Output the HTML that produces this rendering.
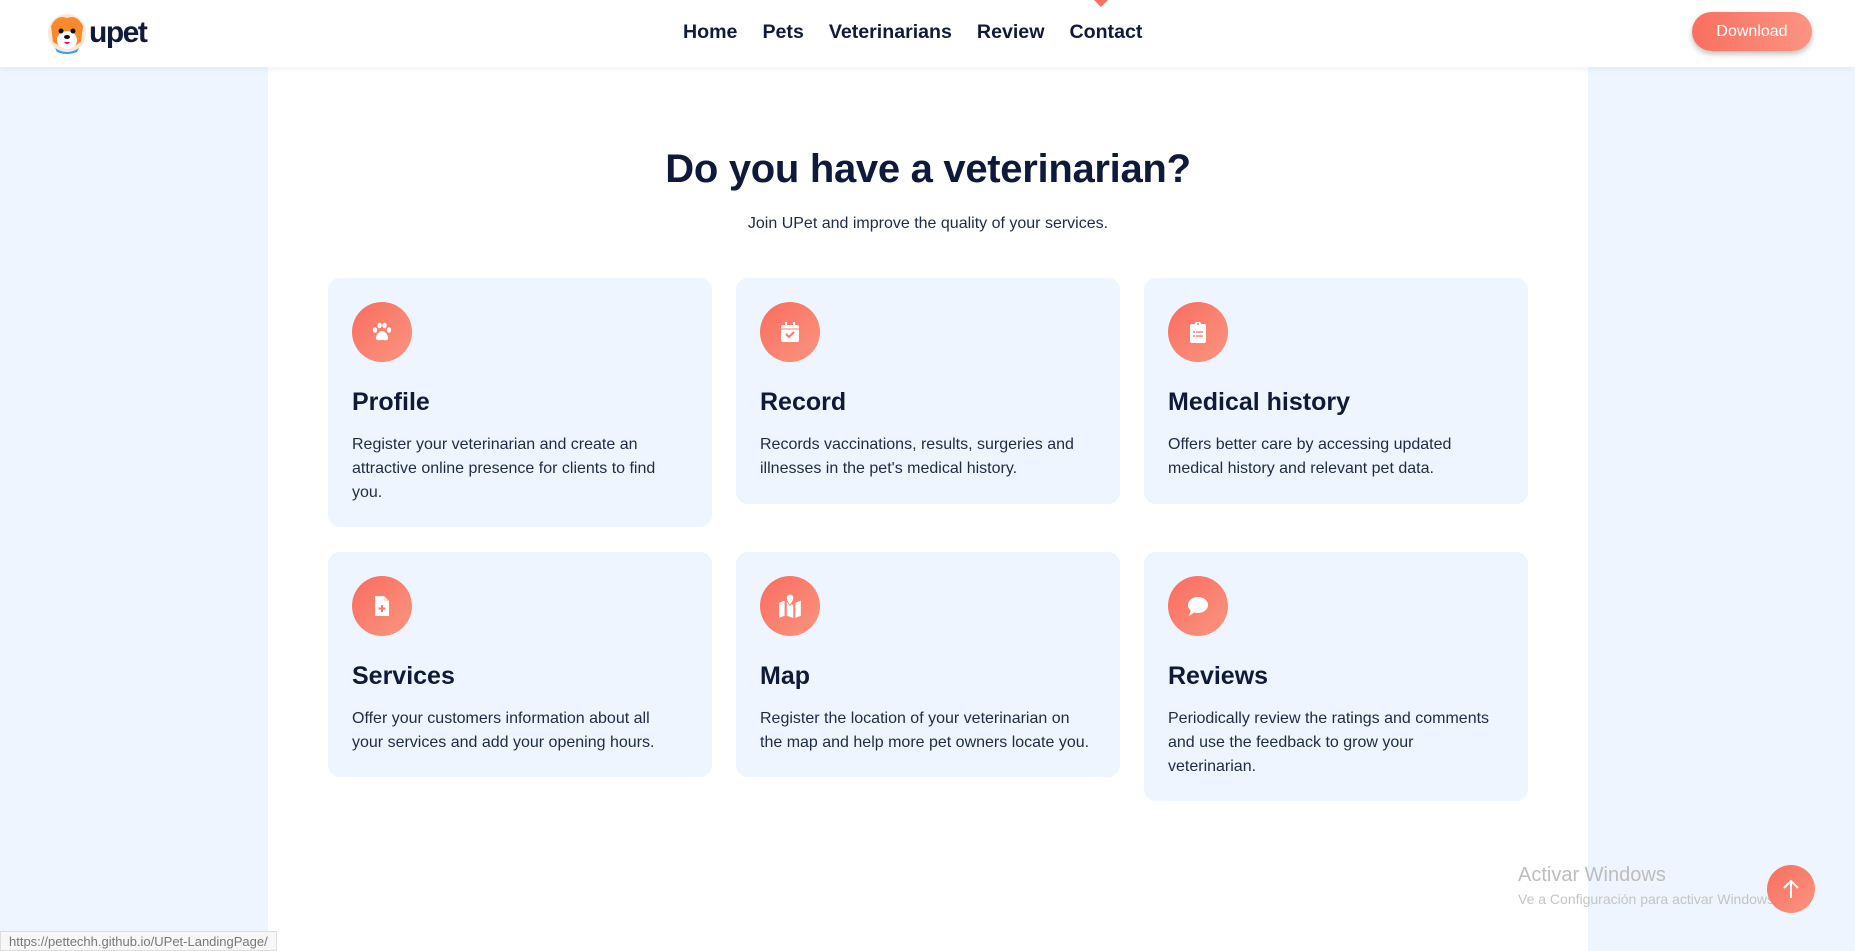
<!DOCTYPE html>
<html><head><meta charset="utf-8"><style>
*{margin:0;padding:0;box-sizing:border-box}
body{width:1855px;height:951px;overflow:hidden;background:#eef5fe;font-family:"Liberation Sans",sans-serif;position:relative}
header{position:absolute;left:0;top:0;width:1855px;height:67px;background:#fff;box-shadow:0 2px 6px rgba(0,0,0,.06);z-index:2}
.logo{position:absolute;left:47px;top:12px;display:flex;align-items:center}
.logo span{font-weight:bold;font-size:30px;color:#111a3a;letter-spacing:-1.5px;margin-left:2px;line-height:1}
nav{position:absolute;left:683px;top:21px;display:flex;gap:25px;font-weight:bold;font-size:19.6px;color:#111a3a}
.tri{position:absolute;left:1094px;top:0;width:0;height:0;border-left:7px solid transparent;border-right:7px solid transparent;border-top:7px solid #fa7062}
.dl{position:absolute;left:1692px;top:12px;width:120px;height:39px;border-radius:20px;background:linear-gradient(90deg,#fa6f60,#fb9481);color:#fff;font-size:16px;text-align:center;line-height:39px;box-shadow:0 3px 6px rgba(0,0,0,.25)}
main{position:absolute;left:268px;top:67px;width:1320px;height:884px;background:#fff}
h1{position:absolute;left:0;width:1320px;top:80px;text-align:center;font-size:40px;letter-spacing:-0.3px;color:#0f1a3a;font-weight:bold}
.sub{position:absolute;left:0;width:1320px;top:148px;text-align:center;font-size:16px;color:#1f2a44}
.card{position:absolute;width:384px;background:#eef5fe;border-radius:12px;padding:24px}
.ic{width:60px;height:60px;border-radius:50%;background:linear-gradient(135deg,#f96d5f,#fb9580);display:flex;align-items:center;justify-content:center;margin-bottom:24px}
.card h3{font-size:25px;line-height:32px;color:#0f1a3a;font-weight:bold}
.card p{margin-top:15px;font-size:16px;line-height:24px;color:#1f2a44;max-width:325px}
.card p.w{max-width:340px}
.up{position:absolute;left:1767px;top:865px;width:48px;height:48px;border-radius:50%;background:linear-gradient(135deg,#f96d5f,#fb9580);display:flex;align-items:center;justify-content:center}
.aw{position:absolute;left:1518px;top:864px;color:#bdbdbd;font-size:20px}
.aw2{position:absolute;left:1518px;top:891px;color:#c4c4c4;font-size:14px;white-space:nowrap}
.st{position:absolute;left:0;top:931px;height:20px;padding:2px 8px;background:#f7f7f7;border:1px solid #ddd;font-size:13px;color:#777}
</style></head><body>
<header>
<div class="logo"><svg width="40" height="42" viewBox="0 0 40 42"><circle cx="20" cy="21" r="19" fill="#fde6d8"/><path d="M4 14 Q10 2 20 6 Q30 2 36 14 L34 30 Q20 40 6 30Z" fill="#f88a2c"/><ellipse cx="20" cy="28" rx="10" ry="9" fill="#fff"/><circle cx="14" cy="19" r="2.5" fill="#111"/><circle cx="26" cy="19" r="2.5" fill="#111"/><ellipse cx="20" cy="25" rx="3" ry="2" fill="#111"/><path d="M17 30 Q20 34 23 30Z" fill="#f05"/><path d="M8 36 Q20 44 32 36 L30 40 Q20 44 10 40Z" fill="#3aa0f0"/></svg><span>upet</span></div>
<nav><span>Home</span><span>Pets</span><span>Veterinarians</span><span>Review</span><span>Contact</span></nav>
<div class="tri"></div>
<div class="dl">Download</div>
</header>
<main>
<h1>Do you have a veterinarian?</h1>
<div class="sub">Join UPet and improve the quality of your services.</div>
</main>
<div class="card" style="left:328px;top:278px;height:249px"><div class="ic"><svg width="24" height="24" viewBox="0 0 24 24" fill="#fff"><ellipse cx="5" cy="10" rx="2.2" ry="2.8"/><ellipse cx="9.5" cy="5.5" rx="2.2" ry="2.8"/><ellipse cx="14.5" cy="5.5" rx="2.2" ry="2.8"/><ellipse cx="19" cy="10" rx="2.2" ry="2.8"/><path d="M12 11c-3 0-7 5-6 8 1 2 4 1 6 1s5 1 6-1c1-3-3-8-6-8z"/></svg></div><h3>Profile</h3><p>Register your veterinarian and create an attractive online presence for clients to find you.</p></div>
<div class="card" style="left:736px;top:278px;height:226px"><div class="ic"><svg width="24" height="24" viewBox="0 0 24 24"><rect x="3" y="5" width="18" height="17" rx="2" fill="#fff"/><rect x="7" y="2" width="2" height="4" fill="#fff"/><rect x="15" y="2" width="2" height="4" fill="#fff"/><path d="M3 9h18" stroke="#fa7b6a" stroke-width="1"/><path d="M8 14l3 3 5-5" stroke="#fa7b6a" stroke-width="2" fill="none"/></svg></div><h3>Record</h3><p class="w">Records vaccinations, results, surgeries and illnesses in the pet's medical history.</p></div>
<div class="card" style="left:1144px;top:278px;height:226px"><div class="ic"><svg width="24" height="24" viewBox="0 0 24 24"><rect x="4" y="4" width="16" height="19" rx="2" fill="#fff"/><rect x="9" y="2" width="6" height="4" rx="2" fill="#fff"/><circle cx="12" cy="4" r="1" fill="#fa7b6a"/><g fill="#fa7b6a"><circle cx="8" cy="12" r="1"/><circle cx="8" cy="16" r="1"/><rect x="10" y="11.3" width="7" height="1.4"/><rect x="10" y="15.3" width="7" height="1.4"/></g></svg></div><h3>Medical history</h3><p class="w">Offers better care by accessing updated medical history and relevant pet data.</p></div>
<div class="card" style="left:328px;top:552px;height:225px"><div class="ic"><svg width="24" height="24" viewBox="0 0 24 24"><path d="M5 2h9l5 5v15H5z" fill="#fff"/><path d="M14 2v5h5" fill="#fdd" /><path d="M12 11v7M8.5 14.5h7" stroke="#fa7b6a" stroke-width="2"/></svg></div><h3>Services</h3><p>Offer your customers information about all your services and add your opening hours.</p></div>
<div class="card" style="left:736px;top:552px;height:225px"><div class="ic"><svg width="26" height="26" viewBox="0 0 24 24" fill="#fff"><path d="M2 9l5-2v14l-5 2z"/><path d="M9 8l6 3v12l-6-2z" /><path d="M17 9l5-2v14l-5 2z"/><path d="M12 1a3.5 3.5 0 0 1 3.5 3.5c0 2.5-3.5 7-3.5 7s-3.5-4.5-3.5-7A3.5 3.5 0 0 1 12 1z" stroke="#fa7b6a" stroke-width=".8"/></svg></div><h3>Map</h3><p class="w">Register the location of your veterinarian on the map and help more pet owners locate you.</p></div>
<div class="card" style="left:1144px;top:552px;height:249px"><div class="ic"><svg width="24" height="24" viewBox="0 0 24 24" fill="#fff"><ellipse cx="12" cy="11" rx="10" ry="8"/><path d="M5 16l-2 6 6-4z"/></svg></div><h3>Reviews</h3><p>Periodically review the ratings and comments and use the feedback to grow your veterinarian.</p></div>
<div class="aw">Activar Windows</div>
<div class="aw2">Ve a Configuración para activar Windows.</div>
<div class="up"><svg width="20" height="22" viewBox="0 0 20 22"><path d="M10 20V3M3 10l7-7 7 7" stroke="#fff" stroke-width="2" fill="none"/></svg></div>
<div class="st">https://pettechh.github.io/UPet-LandingPage/</div>
</body></html>
